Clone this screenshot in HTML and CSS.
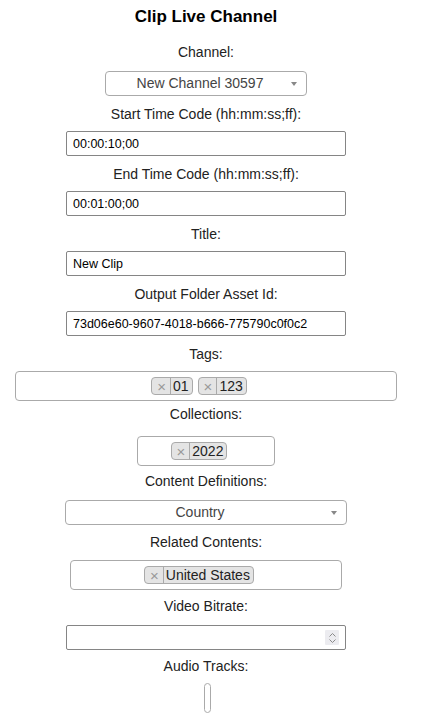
FILE: index.html
```html
<!DOCTYPE html>
<html lang="en">
<head>
<meta charset="utf-8">
<title>Clip Live Channel</title>
<link rel="stylesheet" href="styles.css">
</head>
<body>
<main class="page">
  <h1 class="title">Clip Live Channel</h1>

  <div class="field field--first">
    <label class="label">Channel:</label>
    <div class="select select--channel">
      <span class="select__text">New Channel 30597</span>
      <span class="select__arrow"></span>
    </div>
  </div>

  <div class="field">
    <label class="label">Start Time Code (hh:mm:ss;ff):</label>
    <input class="input" type="text" value="00:00:10;00">
  </div>

  <div class="field">
    <label class="label">End Time Code (hh:mm:ss;ff):</label>
    <input class="input" type="text" value="00:01:00;00">
  </div>

  <div class="field">
    <label class="label">Title:</label>
    <input class="input" type="text" value="New Clip">
  </div>

  <div class="field">
    <label class="label">Output Folder Asset Id:</label>
    <input class="input" type="text" value="73d06e60-9607-4018-b666-775790c0f0c2">
  </div>

  <div class="field">
    <label class="label">Tags:</label>
    <div class="multi multi--tags">
      <span class="chip"><span class="chip__x">×</span><span class="chip__text">01</span></span>
      <span class="chip"><span class="chip__x">×</span><span class="chip__text">123</span></span>
      <span class="multi__search"></span>
    </div>
  </div>

  <div class="field field--collections">
    <label class="label">Collections:</label>
    <div class="multi multi--collections">
      <span class="chip"><span class="chip__x">×</span><span class="chip__text">2022</span></span>
      <span class="multi__search"></span>
    </div>
  </div>

  <div class="field field--cd">
    <label class="label">Content Definitions:</label>
    <div class="select select--cd">
      <span class="select__text">Country</span>
      <span class="select__arrow"></span>
    </div>
  </div>

  <div class="field field--related">
    <label class="label">Related Contents:</label>
    <div class="multi multi--related">
      <span class="chip"><span class="chip__x">×</span><span class="chip__text">United States</span></span>
      <span class="multi__search"></span>
    </div>
  </div>

  <div class="field field--video">
    <label class="label">Video Bitrate:</label>
    <div class="number">
      <input class="number__input" type="text" value="">
      <span class="spinner">
        <svg width="9" height="12" viewBox="0 0 9 12" aria-hidden="true">
          <path d="M1.5 4.5 L4.5 1.5 L7.5 4.5" fill="none" stroke="#8a8a8a" stroke-width="1"/>
          <path d="M1.5 7.5 L4.5 10.5 L7.5 7.5" fill="none" stroke="#8a8a8a" stroke-width="1"/>
        </svg>
      </span>
    </div>
  </div>

  <div class="field field--audio">
    <label class="label">Audio Tracks:</label>
    <div class="multi multi--audio"></div>
  </div>
</main>
</body>
</html>
```

FILE: styles.css
```css
* { box-sizing: border-box; }

html, body {
  margin: 0;
  padding: 0;
  background: #ffffff;
}

body {
  font-family: "Liberation Sans", Arial, sans-serif;
  color: #222222;
  overflow: hidden;
}

.page {
  width: 396px;
  margin-left: 8px;
  display: flex;
  flex-direction: column;
  align-items: center;
}

.title {
  margin: 7px 0 0;
  font-size: 17px;
  line-height: 20px;
  font-weight: bold;
  color: #000;
}

.field {
  display: flex;
  flex-direction: column;
  align-items: center;
  margin-top: 10px;
}

.field--first { margin-top: 17px; }
.field--first .label { margin-bottom: 11px; }

.field--collections { margin-top: 5px; }
.field--collections .label { margin-bottom: 14px; }

.field--cd { margin-top: 7px; }
.field--cd .label { margin-bottom: 11px; }

.field--related { margin-top: 9px; }
.field--related .label { margin-bottom: 10px; }

.field--video { margin-top: 8px; }
.field--video .label { margin-bottom: 11px; }

.field--audio { margin-top: 8px; }
.field--audio .label { margin-bottom: 9px; }

.label {
  display: block;
  font-size: 14px;
  line-height: 16px;
  height: 16px;
  margin-bottom: 9px;
  color: #222;
}

.input {
  width: 280px;
  height: 25px;
  margin: 0;
  padding: 0 6px;
  border: 1px solid #858585;
  border-radius: 2px;
  font-family: "Liberation Sans", Arial, sans-serif;
  font-size: 12.5px;
  color: #000;
  background: #fff;
  outline: none;
}

.select {
  position: relative;
  height: 25px;
  border: 1px solid #aaaaaa;
  border-radius: 4px;
  background: #fff;
  display: flex;
  align-items: center;
  justify-content: center;
  padding: 0 20px 0 8px;
}

.select--channel { width: 202px; }
.select--cd { width: 282px; }

.select__text {
  font-size: 14px;
  color: #444444;
  line-height: 23px;
}

.select__arrow {
  position: absolute;
  right: 9px;
  top: 10px;
  width: 0;
  height: 0;
  border-style: solid;
  border-width: 4px 3.5px 0 3.5px;
  border-color: #888 transparent transparent transparent;
}

.multi {
  height: 30px;
  border: 1px solid #aaaaaa;
  border-radius: 4px;
  background: #fff;
  display: flex;
  align-items: center;
  justify-content: center;
  gap: 5px;
}

.multi__search {
  width: 9px;
  height: 18px;
}

.multi--tags { width: 382px; }
.multi--collections { width: 138px; }
.multi--related { width: 272px; }
.multi--audio { width: 7px; margin-left: 4px; }

.chip {
  display: inline-flex;
  align-items: stretch;
  height: 18px;
  border: 1px solid #aaaaaa;
  border-radius: 4px;
  background: #e4e4e4;
  font-size: 14px;
  line-height: 16px;
  color: #222;
  overflow: hidden;
}

.chip__x {
  color: #999;
  font-size: 15px;
  padding: 0 4px 0 5px;
  border-right: 1px solid #aaaaaa;
  line-height: 17px;
}

.chip__text {
  padding: 0 3px 0 2px;
}

.number {
  width: 280px;
  height: 25px;
  border: 1px solid #858585;
  border-radius: 2px;
  background: #fff;
  display: flex;
  align-items: center;
  padding: 0 6px 0 6px;
}

.number__input {
  flex: 1;
  min-width: 0;
  border: none;
  outline: none;
  padding: 0;
  height: 21px;
  font-family: "Liberation Sans", Arial, sans-serif;
  font-size: 12.5px;
  background: transparent;
}

.spinner {
  width: 14px;
  height: 15px;
  background: #ececf0;
  border-radius: 1px;
  display: flex;
  align-items: center;
  justify-content: center;
}
```
